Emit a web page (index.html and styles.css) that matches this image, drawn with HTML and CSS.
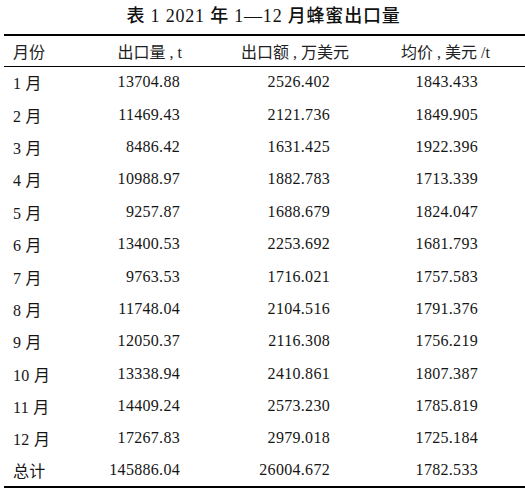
FILE: index.html
```html
<!DOCTYPE html>
<html>
<head>
    <title>2021年1—12月蜂蜜出口量</title>
    <link rel="stylesheet" href="styles.css">
</head>
<body>
    <div class="table-wrap">
        <div class="caption"><span class="cjk">表</span> 1 2021 <span class="cjk">年</span> 1—12 <span class="cjk">月蜂蜜出口量</span></div>
        <table class="data-table">
            <thead>
                <tr>
                    <th class="col-month">月份</th>
                    <th class="col-qty">出口量 , t</th>
                    <th class="col-amount">出口额 , 万美元</th>
                    <th class="col-price">均价 , 美元 /t</th>
                </tr>
            </thead>
            <tbody id="rows"></tbody>
        </table>
    </div>

    <script>
        const rows = [
            ["1 月", "13704.88", "2526.402", "1843.433"],
            ["2 月", "11469.43", "2121.736", "1849.905"],
            ["3 月", "8486.42", "1631.425", "1922.396"],
            ["4 月", "10988.97", "1882.783", "1713.339"],
            ["5 月", "9257.87", "1688.679", "1824.047"],
            ["6 月", "13400.53", "2253.692", "1681.793"],
            ["7 月", "9763.53", "1716.021", "1757.583"],
            ["8 月", "11748.04", "2104.516", "1791.376"],
            ["9 月", "12050.37", "2116.308", "1756.219"],
            ["10 月", "13338.94", "2410.861", "1807.387"],
            ["11 月", "14409.24", "2573.230", "1785.819"],
            ["12 月", "17267.83", "2979.018", "1725.184"],
            ["总计", "145886.04", "26004.672", "1782.533"]
        ];

        const classes = ['col-month', 'col-qty', 'col-amount', 'col-price'];
        const tbody = document.getElementById('rows');

        rows.forEach(row => {
            const tr = document.createElement('tr');
            row.forEach((value, index) => {
                const td = document.createElement('td');
                td.className = classes[index];
                td.textContent = value;
                tr.appendChild(td);
            });
            tbody.appendChild(tr);
        });
    </script>
</body>
</html>
```

FILE: styles.css
```css
body {
    margin: 0;
    background: #ffffff;
    color: #151515;
    font-family: "Liberation Serif", "Noto Sans CJK SC", serif;
}

.table-wrap {
    width: 521px;
    margin-left: 4px;
    padding-top: 2px;
}

.caption {
    height: 28px;
    line-height: 28px;
    margin-bottom: 4px;
    text-align: center;
    font-size: 18px;
    letter-spacing: 0.8px;
    color: #111;
    padding-right: 2px;
}

.caption .cjk {
    font-weight: 500;
}

.data-table {
    width: 521px;
    border-collapse: collapse;
    table-layout: fixed;
    border-top: 2px solid #000;
    border-bottom: 2px solid #000;
    font-size: 16px;
}

.data-table th,
.data-table td {
    box-sizing: border-box;
    padding: 0;
}

.data-table th {
    height: 31px;
    font-weight: normal;
    color: #222;
    border-bottom: 1px solid #000;
}

.data-table td {
    height: 32.4px;
    letter-spacing: 0.3px;
}

.col-month {
    width: 96px;
    text-align: left;
}

.data-table .col-month {
    padding-left: 9px;
}

.col-qty {
    width: 100px;
    text-align: right;
}

.col-amount {
    width: 170px;
    text-align: right;
}

.col-price {
    width: 155px;
    text-align: right;
}

.data-table td.col-qty {
    padding-right: 20px;
}

.data-table td.col-amount {
    padding-right: 40px;
}

.data-table td.col-price {
    padding-right: 47px;
}

.data-table th.col-qty {
    padding-right: 18px;
}

.data-table th.col-amount {
    padding-right: 21px;
}

.data-table th.col-price {
    padding-right: 35px;
}
```
